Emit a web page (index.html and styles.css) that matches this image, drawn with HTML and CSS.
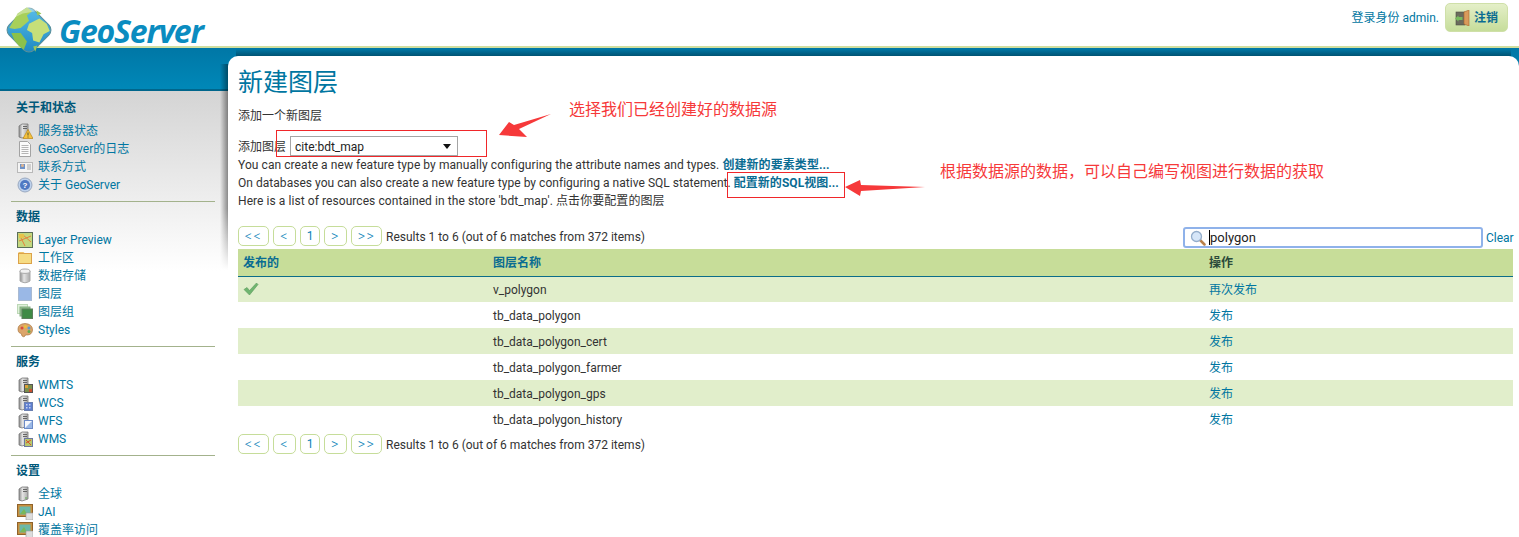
FILE: index.html
```html
<!DOCTYPE html>
<html lang="zh">
<head>
<meta charset="utf-8">
<title>GeoServer</title>
<link rel="stylesheet" href="styles.css">
</head>
<body>
<svg class="defs" width="0" height="0" aria-hidden="true">
  <defs>
    <linearGradient id="srv" x1="0" x2="1" y1="0" y2="0"><stop offset="0" stop-color="#8c8c8c"/><stop offset=".4" stop-color="#e4e4e4"/><stop offset="1" stop-color="#a8a8a8"/></linearGradient>
    <symbol id="server" viewBox="0 0 16 16"><path d="M2 3 L5 1 H11 V13 L5 15 L2 14 Z" fill="url(#srv)" stroke="#777" stroke-width=".8"/><path d="M6 3.5H10M6 5.5H10" stroke="#666"/></symbol>
  </defs>
</svg>
<header class="top">
  <a class="logo">
    <svg class="globe" width="54" height="54" viewBox="0 0 52 52">
      <defs><linearGradient id="sea" x1="0" y1="0" x2="1" y2="1"><stop offset="0" stop-color="#5cc0ea"/><stop offset="1" stop-color="#1b86c0"/></linearGradient></defs>
      <rect x="9" y="9" width="34" height="34" rx="7" transform="rotate(45 26 26)" fill="url(#sea)" stroke="#5a8f9a" stroke-width="1"/>
      <path d="M15 10 L24 4 L29 8 L24 12 L26 17 L18 24 L12 25 L7 24 Z" fill="#a7d05a"/>
      <path d="M26 20 L36 15 L43 20 L46 27 L40 30 L36 38 L30 36 L29 29 L24 26 Z" fill="#c6df79"/>
      <path d="M9 29 L18 29 L24 37 L21 45 L16 41 L12 36 Z" fill="#8cc14c"/>
      <path d="M33 7 L38 10 L34 12 Z M30 42 L34 41 L32 47 Z" fill="#9cc85a"/>
      <path d="M10 15 L24 3 Q26 1.500 28 3 L33 8 L20 10 Z" fill="#fff" opacity=".35"/>
    </svg>
    <span class="wordmark">GeoServer</span>
  </a>
  <div class="login">
    <span class="who">登录身份 admin.</span>
    <a class="logout">
      <svg width="16" height="16" viewBox="0 0 16 16"><rect x="2" y="2" width="9" height="13" fill="#6b6b5d" stroke="#4e4e44" stroke-width=".6"/><path d="M10 2 L15 0 V16 L10 14 Z" fill="#d99a5c" stroke="#a9662c" stroke-width=".6"/><path d="M1 8.500 L4.500 5.500 V7 H8.500 V10 H4.500 V11.500 Z" fill="#79bb5f"/></svg>
      注销
    </a>
  </div>
</header>
<div class="page">
  <nav class="side">
    <section class="group">
      <h3>关于和状态</h3>
      <ul>
        <li><svg width="16" height="16" viewBox="0 0 16 16"><use href="#server"/><path d="M11 6.500 L16 15.500 H6 Z" fill="#f6c23c" stroke="#b98518" stroke-width=".7"/><path d="M11 9.500V12.500M11 13.500V14.500" stroke="#553" stroke-width="1"/></svg>服务器状态</li>
        <li><svg width="16" height="16" viewBox="0 0 16 16"><path d="M2.500 .5H10.500L13.500 3.500V15.500H2.500Z" fill="#fafafa" stroke="#a3a3a3"/><path d="M4.500 4.500H11.500M4.500 6.500H11.500M4.500 8.500H11.500M4.500 10.500H11.500M4.500 12.500H11.500" stroke="#b5b5b5"/></svg>GeoServer的日志</li>
        <li><svg width="16" height="16" viewBox="0 0 16 16"><rect x=".5" y="3.500" width="15" height="10" fill="#f4f4f4" stroke="#b9b9b9"/><rect x="3" y="5" width="5" height="5" fill="#6f93c8"/><circle cx="5.500" cy="6.500" r="1.500" fill="#e0b48c"/><path d="M10 6H14M10 8H14M10 10H14" stroke="#aaa"/></svg>联系方式</li>
        <li><svg width="16" height="16" viewBox="0 0 16 16"><circle cx="8" cy="8" r="7" fill="#bcd0ec" stroke="#9aa9c0"/><circle cx="8" cy="8" r="5" fill="#4f78c2"/><text class="q" x="8" y="11" text-anchor="middle">?</text></svg>关于 GeoServer</li>
      </ul>
    </section>
    <section class="group">
      <h3>数据</h3>
      <ul>
        <li><svg width="16" height="16" viewBox="0 0 16 16"><rect x=".5" y=".5" width="15" height="15" fill="#c3d87f" stroke="#5b6f58"/><path d="M2 2 L8 14 M5 2 L14 10 M2 9 L14 4" stroke="#e6803a" stroke-width="1"/><path d="M2 2H7V6H2Z" fill="#e6c34a"/></svg>Layer Preview</li>
        <li><svg width="16" height="16" viewBox="0 0 16 16"><path d="M1.500 3.500 H6 L7.500 2 H1.500 Z" fill="#eec36a"/><rect x="1.500" y="3.500" width="13" height="10" fill="#f6dc84" stroke="#dca24a"/></svg>工作区</li>
        <li><svg width="16" height="16" viewBox="0 0 16 16"><path d="M3 3 V13 Q8 16.500 13 13 V3 Z" fill="url(#srv)" stroke="#aaa"/><ellipse cx="8" cy="3.200" rx="5" ry="2.200" fill="#f2f2f2" stroke="#aaa"/></svg>数据存储</li>
        <li><svg width="16" height="16" viewBox="0 0 16 16"><rect x="1.500" y="1.500" width="13" height="13" fill="#9ab8e6" stroke="#a9bad2"/></svg>图层</li>
        <li><svg width="16" height="16" viewBox="0 0 16 16"><rect x=".5" y=".5" width="10" height="9" fill="#dff0da" stroke="#bcd8b6"/><rect x="3" y="3" width="10" height="9" fill="#93c08f" stroke="#84ad80"/><rect x="5" y="5" width="10.500" height="9.500" fill="#3f8a45" stroke="#5c7f5c"/></svg>图层组</li>
        <li><svg width="16" height="16" viewBox="0 0 16 16"><path d="M1 7 Q1 2 8 1.500 Q15.500 2 15.500 8 Q15 13 10 13 Q8.500 12 8 14 Q7 15.500 5 14 Q5 11 2 10.500 Q1 9.500 1 7Z" fill="#dca56a" stroke="#a8763f" stroke-width=".7"/><circle cx="5" cy="6" r="1.500" fill="#d94a3a"/><circle cx="8.500" cy="4.500" r="1.500" fill="#e8c33a"/><circle cx="12" cy="6" r="1.500" fill="#5a9ad0"/><circle cx="12" cy="9.500" r="1.500" fill="#5cae4f"/></svg>Styles</li>
      </ul>
    </section>
    <section class="group">
      <h3>服务</h3>
      <ul>
        <li><svg width="16" height="16" viewBox="0 0 16 16"><use href="#server"/><rect x="7.500" y="7.500" width="8" height="8" fill="#7c8f4c" stroke="#555"/><path d="M8 8H11V11H8Z" fill="#d9a238"/><path d="M12 12H15V15H12Z" fill="#c9502e"/></svg>WMTS</li>
        <li><svg width="16" height="16" viewBox="0 0 16 16"><use href="#server"/><rect x="7.500" y="7.500" width="8" height="8" fill="#5f7fd0" stroke="#6a7fb0"/><path d="M9 9H10.500V10.500H9ZM12 9H13.500V10.500H12ZM9 12H10.500V13.500H9ZM12 12H13.500V13.500H12Z" fill="#c8d4f0"/></svg>WCS</li>
        <li><svg width="16" height="16" viewBox="0 0 16 16"><use href="#server"/><rect x="7.500" y="7.500" width="8" height="8" fill="#f6f8fd" stroke="#6d8bc7"/><path d="M8 15 L15 8 V15Z" fill="#9ab8e6"/></svg>WFS</li>
        <li><svg width="16" height="16" viewBox="0 0 16 16"><use href="#server"/><rect x="7.500" y="7.500" width="8" height="8" fill="#b9c86a" stroke="#6d78a0"/><path d="M9 9 L14 14 M14 9 L9 12" stroke="#d6532e"/></svg>WMS</li>
      </ul>
    </section>
    <section class="group">
      <h3>设置</h3>
      <ul>
        <li><svg width="16" height="16" viewBox="0 0 16 16"><use href="#server"/><path d="M8 12H10" stroke="#5aa84a"/></svg>全球</li>
        <li><svg width="16" height="16" viewBox="0 0 16 16"><rect x=".5" y=".5" width="15" height="12" fill="#c98f3f" stroke="#8f632a"/><rect x="2.500" y="2.500" width="11" height="8" fill="#6cb8a8"/><path d="M3 10 L7 5 L10 10Z" fill="#79b85a"/><rect x="9" y="9" width="7" height="7" fill="#ddd" stroke="#999" stroke-width=".6"/></svg>JAI</li>
        <li><svg width="16" height="16" viewBox="0 0 16 16"><rect x=".5" y=".5" width="15" height="12" fill="#c98f3f" stroke="#8f632a"/><rect x="2.500" y="2.500" width="11" height="8" fill="#6cb8a8"/><path d="M3 10 L7 5 L10 10Z" fill="#79b85a"/><rect x="9" y="9" width="7" height="7" fill="#ddd" stroke="#999" stroke-width=".6"/></svg>覆盖率访问</li>
      </ul>
    </section>
  </nav>
  <main class="card">
    <h1>新建图层</h1>
    <p class="sub">添加一个新图层</p>
    <div class="store">
      <label>添加图层</label>
      <div class="select"><span>cite:bdt_map</span><i class="caret"></i></div>
    </div>
    <p class="line">You can create a new feature type by manually configuring the attribute names and types. <a class="strong">创建新的要素类型...</a></p>
    <p class="line tight">On databases you can also create a new feature type by configuring a native SQL statement. <a class="strong">配置新的SQL视图...</a></p>
    <p class="line">Here is a list of resources contained in the store 'bdt_map'. 点击你要配置的图层</p>
    <div class="bar first">
      <div class="pager"><a class="wide">&lt;&lt;</a><a>&lt;</a><a class="num">1</a><a>&gt;</a><a class="wide">&gt;&gt;</a><span>Results 1 to 6 (out of 6 matches from 372 items)</span></div>
      <div class="filter">
        <div class="search">
          <svg width="16" height="16" viewBox="0 0 16 16"><path d="M9.500 9.500 L14.500 14.500" stroke="#b9814a" stroke-width="2.500" stroke-linecap="round"/><circle cx="6.500" cy="6.500" r="5" fill="#d6e6f8" stroke="#94aecb" stroke-width="1.300"/></svg>
          <span class="cursor"></span><span>polygon</span>
        </div>
        <a class="clear">Clear</a>
      </div>
    </div>
    <table>
      <thead><tr><th class="c1">发布的</th><th class="c2">图层名称</th><th>操作</th></tr></thead>
      <tbody>
        <tr><td><svg class="check" width="16" height="14" viewBox="0 0 16 14"><path d="M1 7.500 L4 5.500 L6.500 8.500 L13.500 1 L15 2.500 L6.500 13 Z" fill="#6fb56f" stroke="#5c9a5c" stroke-width=".6"/></svg></td><td>v_polygon</td><td><a>再次发布</a></td></tr>
        <tr><td></td><td>tb_data_polygon</td><td><a>发布</a></td></tr>
        <tr><td></td><td>tb_data_polygon_cert</td><td><a>发布</a></td></tr>
        <tr><td></td><td>tb_data_polygon_farmer</td><td><a>发布</a></td></tr>
        <tr><td></td><td>tb_data_polygon_gps</td><td><a>发布</a></td></tr>
        <tr><td></td><td>tb_data_polygon_history</td><td><a>发布</a></td></tr>
      </tbody>
    </table>
    <div class="bar last">
      <div class="pager"><a class="wide">&lt;&lt;</a><a>&lt;</a><a class="num">1</a><a>&gt;</a><a class="wide">&gt;&gt;</a><span>Results 1 to 6 (out of 6 matches from 372 items)</span></div>
    </div>
  </main>
</div>
<div class="mark box-a"></div>
<div class="mark box-b"></div>
<svg class="arrows" width="1519" height="537" viewBox="0 0 1519 537" aria-hidden="true">
  <path d="M499 135 L509 122 L514 125 L551 114 L519 129 L527 137 Z" fill="#f6393a"/>
  <path d="M845 187 L860 180 L861 185 L925 187 L861 191 L860 196 Z" fill="#f6393a"/>
</svg>
<p class="note note-a">选择我们已经创建好的数据源</p>
<p class="note note-b">根据数据源的数据，可以自己编写视图进行数据的获取</p>
</body>
</html>
```
FILE: styles.css
```css
* { box-sizing: border-box; }
html, body { margin: 0; padding: 0; }
body {
  position: relative;
  width: 1519px;
  height: 537px;
  overflow: hidden;
  background: #fff;
  font: 12px/18px Roboto, "Noto Sans CJK SC", sans-serif;
  color: #333;
}
.defs { position: absolute; }
a { color: #0076a1; }
.top {
  position: relative;
  z-index: 1;
  height: 48px;
  border-bottom: 2px solid #d0de9f;
  display: flex;
  justify-content: space-between;
  align-items: flex-start;
}
.logo { display: flex; align-items: flex-start; height: 46px; padding: 3px 0 0 2px; }
.globe { flex: none; }
.wordmark {
  font: italic 700 32px/36px "Open Sans", sans-serif;
  color: #0a8cc0;
  margin: 10px 0 0 3px;
  letter-spacing: -1.2px;
}
.login { display: flex; align-items: center; padding: 3px 11px 0 0; gap: 6px; }
.who { color: #0076a1; }
.logout {
  display: flex;
  align-items: center;
  gap: 4px;
  width: 63px;
  height: 29px;
  padding-left: 8px;
  border: 1px solid #cfe0a8;
  border-radius: 5px;
  background: linear-gradient(#e4efc8, #c6dd9a);
  font-weight: 700;
  color: #0a6c92;
}
.page {
  display: flex;
  height: 489px;
  background:
    linear-gradient(#0077a6, #0088b8 41px, #00668c 41px) top / 100% 43px no-repeat,
    linear-gradient(#d4d4d4, #fff 180px) 0 43px no-repeat;
}
.side { width: 228px; padding: 50px 13px 0 11px; flex: none; }
.group { border-bottom: 1px solid #a3b28c; margin-bottom: 5px; padding: 1px 0 7px; }
.group:last-child { border-bottom: 0; }
.group h3 { margin: 0 0 5px 5px; font-size: 12px; line-height: 18px; font-weight: 700; color: #00587a; }
.group ul { list-style: none; margin: 0; padding: 0; }
.group li { display: flex; align-items: center; height: 18px; padding-left: 6px; gap: 5px; color: #0076a1; }
.q { font: 700 8px "Liberation Sans", sans-serif; fill: #fff; }
.card {
  position: relative;
  flex: 1;
  margin-top: 8px;
  padding: 11px 6px 0 10px;
  background: #fff;
  border-radius: 10px 10px 0 0;
}
.card::before {
  content: "";
  position: absolute;
  left: -8px;
  top: 8px;
  width: 8px;
  height: 206px;
  background: linear-gradient(to right, transparent, rgba(0, 0, 0, .42));
  -webkit-mask-image: linear-gradient(#000 70%, transparent);
  mask-image: linear-gradient(#000 70%, transparent);
}
.card::after {
  content: "";
  position: absolute;
  left: 8px;
  right: 8px;
  top: -7px;
  height: 7px;
  background: linear-gradient(transparent, rgba(0, 0, 0, .32));
}
.card h1 { margin: 0; font-size: 25px; line-height: 32px; font-weight: 400; color: #0076a1; }
.sub { margin: 8px 0 0; line-height: 18px; }
.store { display: flex; align-items: center; margin-top: 11px; height: 20px; gap: 4px; }
.store label { padding-top: 2px; }
.select {
  width: 168px;
  height: 20px;
  border: 1px solid #a5a5a5;
  display: flex;
  align-items: center;
  justify-content: space-between;
  padding: 2px 5px 0 4px;
  color: #222;
}
.caret { width: 0; height: 0; border: 4px solid transparent; border-top: 5px solid #111; border-bottom: 0; margin: -2px 1px 0 0; }
.line { margin: 0; line-height: 18px; letter-spacing: .07px; }
.line.tight { letter-spacing: .035px; }
.strong { font-weight: 700; color: #0a6c92; }
.bar { display: flex; justify-content: space-between; align-items: flex-start; height: 20px; }
.bar.first { margin-top: 16px; height: 23px; }
.bar.last { margin-top: 2px; }
.pager { display: flex; align-items: flex-start; gap: 4px; }
.pager span { padding-top: 1px; line-height: 20px; }
.pager a {
  display: block;
  width: 23px;
  height: 20px;
  line-height: 19px;
  text-align: center;
  border: 1px solid #c6dd9a;
  border-radius: 5px;
  font-size: 14px;
  font-weight: 300;
  letter-spacing: 1.5px;
  color: #0a82b8;
}
.pager a.wide { width: 31px; }
.pager a.num { width: 20px; font-size: 12px; font-weight: 400; letter-spacing: 0; }
.filter { display: flex; align-items: center; gap: 3px; margin-top: 1px; }
.search {
  flex: none;
  display: flex;
  align-items: center;
  width: 300px;
  height: 21px;
  padding-left: 5px;
  border: 2px solid #8fb2ea;
  border-radius: 3px;
  font-size: 13px;
  color: #222;
}
.search svg { margin-right: 3px; }
.clear { width: 27px; white-space: nowrap; }
.cursor { width: 1px; height: 15px; background: #000; }
table { width: 100%; border-collapse: collapse; table-layout: fixed; margin-top: 0; }
th { height: 27px; padding: 2px 0 0 5px; text-align: left; background: #c7dd99; border-bottom: 1px solid #0b6d88; font-weight: 700; color: #2b4a3a; }
th.c1 { color: #0a6c92; }
th.c2 { color: #0a6c92; }
.c1 { width: 250px; }
.c2 { width: 716px; }
td { height: 26px; padding: 2px 0 0 5px; }
tbody tr:nth-child(odd) td { background: #e1eecb; }
.check { display: block; margin-top: -2px; }
.mark { position: absolute; border: 1px solid #f0272a; }
.box-a { left: 276px; top: 130px; width: 211px; height: 27px; }
.box-b { left: 727px; top: 172px; width: 118px; height: 26px; }
.arrows { position: absolute; left: 0; top: 0; pointer-events: none; }
.note { position: absolute; margin: 0; font-size: 16px; line-height: 22px; color: #f6393a; }
.note-a { left: 569px; top: 99px; }
.note-b { left: 940px; top: 161px; }
```
